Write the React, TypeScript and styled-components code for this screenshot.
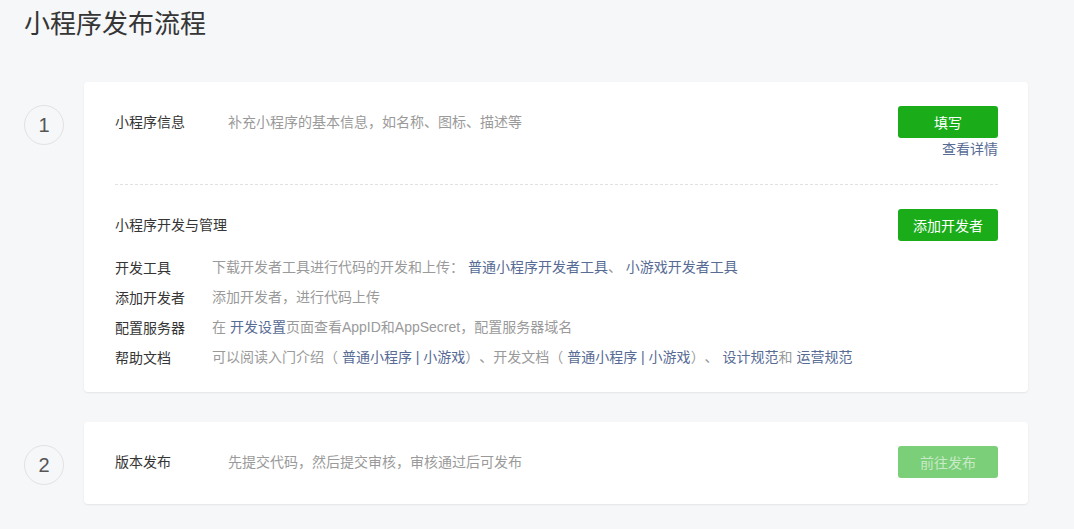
import React from 'react'
import styled, { createGlobalStyle } from 'styled-components'

const GlobalStyle = createGlobalStyle`
  html, body {
    margin: 0;
    padding: 0;
    background: #f6f7f9;
  }
  body {
    font-family: 'Liberation Sans', 'Noto Sans CJK SC', sans-serif;
    font-size: 14px;
    color: #353535;
    text-spacing-trim: space-all;
  }
`

type Link = { text: string }
type Part = string | Link

const devRows: { label: string; parts: Part[] }[] = [
  {
    label: '开发工具',
    parts: [
      '下载开发者工具进行代码的开发和上传： ',
      { text: '普通小程序开发者工具' },
      '、 ',
      { text: '小游戏开发者工具' },
    ],
  },
  { label: '添加开发者', parts: ['添加开发者，进行代码上传'] },
  {
    label: '配置服务器',
    parts: ['在 ', { text: '开发设置' }, '页面查看AppID和AppSecret，配置服务器域名'],
  },
  {
    label: '帮助文档',
    parts: [
      '可以阅读入门介绍（ ',
      { text: '普通小程序 | 小游戏' },
      '）、开发文档（ ',
      { text: '普通小程序 | 小游戏' },
      '）、 ',
      { text: '设计规范' },
      '和 ',
      { text: '运营规范' },
    ],
  },
]

export default function App() {
  return (
    <>
      <GlobalStyle />
      <Page>
        <Title>小程序发布流程</Title>

        <Step>
          <StepNum>1</StepNum>
          <Card>
            <Section bottom={25} divided>
              <MainRow>
                <Label wide>小程序信息</Label>
                <Desc>补充小程序的基本信息，如名称、图标、描述等</Desc>
                <Actions>
                  <Button>填写</Button>
                  <TextLink>查看详情</TextLink>
                </Actions>
              </MainRow>
            </Section>

            <Section bottom={20}>
              <MainRow>
                <Label>小程序开发与管理</Label>
                <Actions>
                  <Button>添加开发者</Button>
                </Actions>
              </MainRow>
              <DevList>
                {devRows.map((row) => (
                  <DevRow key={row.label}>
                    <DevLabel>{row.label}</DevLabel>
                    <Desc>
                      {row.parts.map((p, i) =>
                        typeof p === 'string' ? (
                          <span key={i}>{p}</span>
                        ) : (
                          <InlineLink key={i}>{p.text}</InlineLink>
                        )
                      )}
                    </Desc>
                  </DevRow>
                ))}
              </DevList>
            </Section>
          </Card>
        </Step>

        <Step>
          <StepNum>2</StepNum>
          <Card>
            <Section bottom={26}>
              <MainRow>
                <Label wide>版本发布</Label>
                <Desc>先提交代码，然后提交审核，审核通过后可发布</Desc>
                <Actions>
                  <Button disabled>前往发布</Button>
                </Actions>
              </MainRow>
            </Section>
          </Card>
        </Step>
      </Page>
    </>
  )
}

const Page = styled.div`
  padding: 6px 46px 30px 24px;
`

const Title = styled.h1`
  margin: 0 0 40px;
  font-size: 26px;
  line-height: 36px;
  font-weight: 400;
  color: #353535;
`

const Step = styled.div`
  display: flex;
  align-items: flex-start;
  gap: 20px;

  & + & {
    margin-top: 30px;
  }
`

const StepNum = styled.div`
  flex: none;
  width: 38px;
  height: 38px;
  margin-top: 23px;
  border: 1px solid #e2e2e2;
  border-radius: 50%;
  display: flex;
  align-items: center;
  justify-content: center;
  font-size: 20px;
  color: #555;
  font-family: 'Liberation Sans', sans-serif;
`

const Card = styled.div`
  flex: 1;
  background: #fff;
  border-radius: 4px;
  box-shadow: 0 1px 2px rgba(0, 0, 0, 0.08);
  padding: 0 30px 0 31px;
`

const Section = styled.div<{ divided?: boolean; bottom: number }>`
  padding: 24px 0 ${(p) => p.bottom}px;
  border-bottom: ${(p) => (p.divided ? '1px dashed #e1e1e1' : 'none')};
`

const MainRow = styled.div`
  display: flex;
  align-items: flex-start;
`

const Label = styled.div<{ wide?: boolean }>`
  flex: none;
  width: ${(p) => (p.wide ? '113px' : 'auto')};
  line-height: 32px;
  color: #353535;
`

const Desc = styled.div`
  flex: 1;
  line-height: 32px;
  color: #9a9a9a;
`

const Actions = styled.div`
  margin-left: auto;
  display: flex;
  flex-direction: column;
  align-items: flex-end;
`

const Button = styled.button`
  width: 100px;
  height: 32px;
  border: none;
  border-radius: 3px;
  background: ${(p) => (p.disabled ? '#7bcf79' : '#1aad19')};
  color: ${(p) => (p.disabled ? '#c9eac8' : '#fff')};
  font-family: inherit;
  font-size: 14px;
  cursor: ${(p) => (p.disabled ? 'default' : 'pointer')};
`

const TextLink = styled.a`
  margin-top: 1px;
  line-height: 20px;
  color: #576b95;
  cursor: pointer;
`

const DevList = styled.div`
  margin-top: 11px;
`

const DevRow = styled.div`
  display: flex;
  height: 30px;
  align-items: center;

  ${Desc} {
    line-height: 30px;
  }
`

const DevLabel = styled.div`
  flex: none;
  width: 97px;
  color: #353535;
`

const InlineLink = styled.a`
  color: #576b95;
  cursor: pointer;
`
